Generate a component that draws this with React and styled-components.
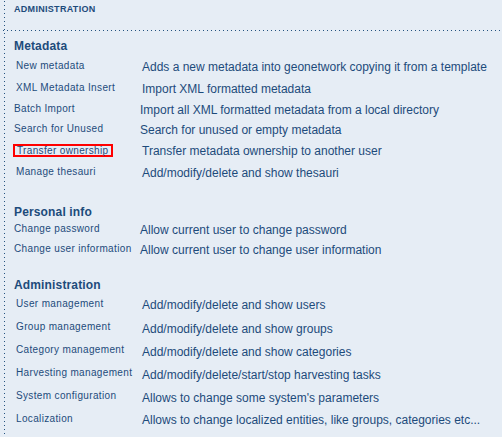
import React from "react";
import styled, { createGlobalStyle } from "styled-components";

const ink = "#1d4b7b";
const dot = "#24527f";

const Global = createGlobalStyle`
  html, body { margin: 0; padding: 0; background: #e6edf5; }
  body { font-family: "Liberation Sans", Arial, sans-serif; color: ${ink}; }
`;

const Page = styled.div`
  min-height: 437px;
  background-color: #e6edf5;
  background-image: linear-gradient(to bottom, ${dot} 1px, transparent 1px);
  background-size: 1px 4px;
  background-repeat: repeat-y;
  background-position: 4px 1px;
  overflow: hidden;
`;

const Header = styled.div`
  box-sizing: border-box;
  height: 31px;
  padding: 3px 0 0 14px;
  background-image: linear-gradient(to right, ${dot} 1px, transparent 1px);
  background-size: 4px 1px;
  background-repeat: repeat-x;
  background-position: 3px 30px;
`;

const HeaderTitle = styled.div`
  font-size: 9px;
  font-weight: bold;
  letter-spacing: 0.3px;
  line-height: 12px;
  text-transform: uppercase;
`;

const Content = styled.div`
  padding-left: 14px;
`;

const SectionTitle = styled.h2`
  margin: ${(p) => p.$top}px 0 ${(p) => p.$bottom}px 0;
  font-size: 12px;
  font-weight: bold;
  letter-spacing: 0.15px;
  line-height: 16px;
`;

const Row = styled.div`
  display: grid;
  grid-template-columns: 126px 1fr;
  align-items: center;
  height: ${(p) => p.$h}px;
  padding-left: ${(p) => (p.$padded ? 2 : 0)}px;
`;

const Link = styled.span`
  justify-self: start;
  font-size: 10px;
  letter-spacing: 0.35px;
  line-height: ${(p) => (p.$selected ? 9 : 12)}px;
  margin-bottom: 3px;
  white-space: nowrap;
  ${(p) =>
    p.$selected &&
    `
    border: 2px solid #ff0000;
    padding: 0 2px;
    margin-left: -3px;
    margin-bottom: 1px;
  `}
`;

const Desc = styled.span`
  font-size: 12px;
  line-height: 14px;
  white-space: nowrap;
`;

const sections = [
  {
    title: "Metadata",
    top: 7,
    bottom: 2,
    rows: [
      { l: "New metadata", r: "Adds a new metadata into geonetwork copying it from a template", h: 22, p: true },
      { l: "XML Metadata Insert", r: "Import XML formatted metadata", h: 22, p: true },
      { l: "Batch Import", r: "Import all XML formatted metadata from a local directory", h: 20 },
      { l: "Search for Unused", r: "Search for unused or empty metadata", h: 20 },
      { l: "Transfer ownership", r: "Transfer metadata ownership to another user", h: 22, p: true, s: true },
      { l: "Manage thesauri", r: "Add/modify/delete and show thesauri", h: 22, p: true },
    ],
  },
  {
    title: "Personal info",
    top: 20,
    bottom: 0,
    rows: [
      { l: "Change password", r: "Allow current user to change password", h: 20 },
      { l: "Change user information", r: "Allow current user to change user information", h: 20 },
    ],
  },
  {
    title: "Administration",
    top: 17,
    bottom: 0,
    rows: [
      { l: "User management", r: "Add/modify/delete and show users", h: 24, p: true },
      { l: "Group management", r: "Add/modify/delete and show groups", h: 23, p: true },
      { l: "Category management", r: "Add/modify/delete and show categories", h: 23, p: true },
      { l: "Harvesting management", r: "Add/modify/delete/start/stop harvesting tasks", h: 23, p: true },
      { l: "System configuration", r: "Allows to change some system's parameters", h: 23, p: true },
      { l: "Localization", r: "Allows to change localized entities, like groups, categories etc...", h: 22, p: true },
    ],
  },
];

export default function App() {
  return (
    <>
      <Global />
      <Page>
        <Header>
          <HeaderTitle>Administration</HeaderTitle>
        </Header>
        <Content>
          {sections.map((sec) => (
            <section key={sec.title}>
              <SectionTitle $top={sec.top} $bottom={sec.bottom}>
                {sec.title}
              </SectionTitle>
              {sec.rows.map((row) => (
                <Row key={row.l} $h={row.h} $padded={row.p}>
                  <Link $selected={row.s}>{row.l}</Link>
                  <Desc>{row.r}</Desc>
                </Row>
              ))}
            </section>
          ))}
        </Content>
      </Page>
    </>
  );
}
